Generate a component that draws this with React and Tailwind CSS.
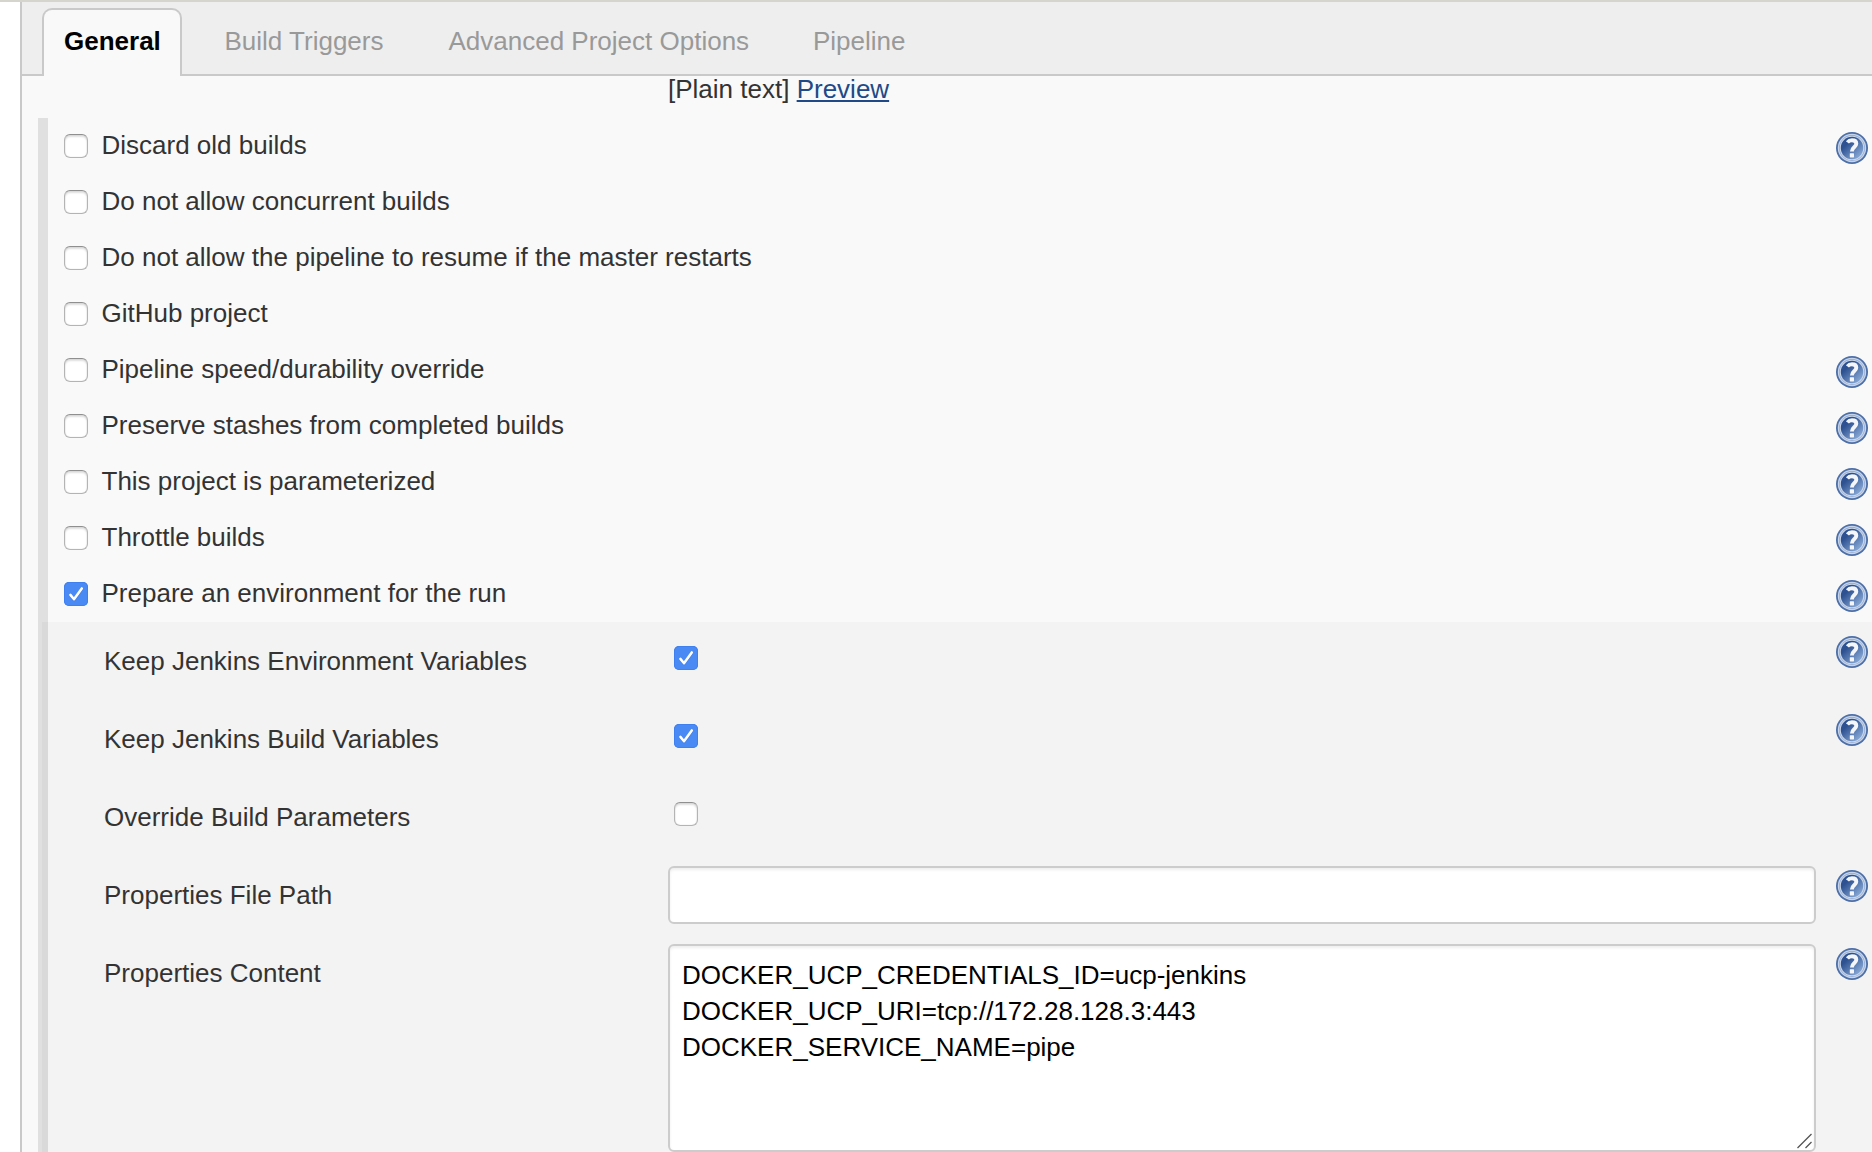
import React from "react";

const options = [
  { label: "Discard old builds", help: true },
  { label: "Do not allow concurrent builds" },
  { label: "Do not allow the pipeline to resume if the master restarts" },
  { label: "GitHub project" },
  { label: "Pipeline speed/durability override", help: true },
  { label: "Preserve stashes from completed builds", help: true },
  { label: "This project is parameterized", help: true },
  { label: "Throttle builds", help: true },
  { label: "Prepare an environment for the run", help: true, checked: true },
];

const content = `DOCKER_UCP_CREDENTIALS_ID=ucp-jenkins
DOCKER_UCP_URI=tcp://172.28.128.3:443
DOCKER_SERVICE_NAME=pipe`;

function Checkbox({ checked }) {
  if (checked) {
    return (
      <span className="block size-6 shrink-0 rounded-[5px] bg-[#4a8af4] shadow-[inset_0_0_0_1px_#3f80ee]">
        <svg viewBox="0 0 24 24" className="size-6" fill="none" strokeLinecap="round" strokeLinejoin="round">
          <path d="M6.4 13.6 10 18 17.8 7.2" stroke="#2f66c4" strokeOpacity="0.45" strokeWidth="2.4" />
          <path d="M6.4 12.9 10 17.2 17.8 6.4" stroke="#fff" strokeWidth="2.5" />
        </svg>
      </span>
    );
  }
  return (
    <span className="block size-6 shrink-0 rounded-[6px] border border-[#b4b4b4] border-t-[#8f8f8f] bg-white shadow-[inset_0_2px_2px_rgba(0,0,0,0.13),inset_0_0_1px_rgba(0,0,0,0.25)]" />
  );
}

function HelpIcon() {
  return (
    <svg viewBox="0 0 32 32" className="size-8 shrink-0" fill="none">
      <defs>
        <linearGradient id="helpFill" x1="0.15" y1="0.15" x2="0.85" y2="0.9">
          <stop offset="0.2" stopColor="#2d5191" />
          <stop offset="1" stopColor="#88a9d6" />
        </linearGradient>
      </defs>
      <circle cx="16" cy="16" r="16" fill="#4c6fa8" />
      <circle cx="16" cy="16" r="14.2" fill="#c6d3e8" />
      <circle cx="16" cy="16" r="12.9" fill="#8ea8cf" />
      <circle cx="16" cy="16" r="12.3" fill="#cbd8eb" />
      <circle cx="16" cy="16" r="11.2" fill="url(#helpFill)" />
      <path
        d="M11.4 10.4C12.6 8.9 14.2 8.300 16 8.300C18.700 8.300 20.300 9.700 20.300 11.800C20.300 15 15.900 15 15.900 19.400"
        stroke="#f4f6fa"
        strokeWidth="3.9"
      />
      <rect x="13.800" y="21.200" width="4.200" height="4.200" rx="0.600" fill="#f4f6fa" />
    </svg>
  );
}

function Tab({ children, className }) {
  return <div className={`h-full pt-[24px] leading-[30px] text-[#999] ${className}`}>{children}</div>;
}

function Field({ label, help, children }) {
  return (
    <div className="flex min-h-[78px] items-start">
      <div className="w-[564px] shrink-0 pt-[24px] leading-[30px]">{label}</div>
      <div className="w-[1168px] shrink-0">{children}</div>
      {help && (
        <div className="pt-[14px]">
          <HelpIcon />
        </div>
      )}
    </div>
  );
}

export default function App() {
  return (
    <div className="flex h-[1152px] w-[1872px] flex-col overflow-hidden border-t-2 border-[#d5d5cd] bg-white font-['Liberation_Sans',Arial,sans-serif] text-[26px] leading-[30px] text-[#333]">
      <div className="ml-5 flex min-h-0 flex-1 flex-col border-l-2 border-[#c9c9c9] bg-[#f9f9f9]">
        <nav className="flex h-[74px] shrink-0 bg-[#eee]">
          <div className="w-5 border-b-2 border-[#c9c9c9]" />
          <div className="flex w-[140px] pt-[6px]">
            <div className="flex-1 rounded-t-[10px] border-2 border-b-0 border-[#c9c9c9] bg-[#f9f9f9] pl-5 pt-4 font-bold leading-[30px] text-black">
              General
            </div>
          </div>
          <div className="flex flex-1 border-b-2 border-[#c9c9c9]">
            <Tab className="w-[224px] pl-[42.5px]">Build Triggers</Tab>
            <Tab className="w-[365px] pl-[42.5px]">Advanced Project Options</Tab>
            <Tab className="pl-[42px]">Pipeline</Tab>
          </div>
        </nav>

        <div className="h-[42px] shrink-0 pl-[646px] leading-[26px]">
          [Plain text]{" "}
          <a className="text-[#204a87] underline decoration-2 underline-offset-[2px]">Preview</a>
        </div>

        <div className="ml-4 flex min-h-0 flex-1">
          <div className="flex w-[10px] shrink-0 flex-col">
            <div className="h-[504px] shrink-0 bg-[#e0e0e0]" />
            <div className="flex flex-1">
              <div className="w-1 bg-[#e0e0e0]" />
              <div className="flex-1 bg-[#d9d9d9]" />
            </div>
          </div>
          <div className="flex flex-1 flex-col">
            {options.map((o) => (
              <div key={o.label} className="flex h-14 shrink-0 items-start pl-4">
                <div className="pt-4">
                  <Checkbox checked={o.checked} />
                </div>
                <div className="flex-1 pl-[13.5px] pt-3 leading-[30px]">{o.label}</div>
                {o.help && (
                  <div className="pr-1 pt-[14px]">
                    <HelpIcon />
                  </div>
                )}
              </div>
            ))}

            <div className="flex-1 bg-[#f3f3f3] pl-14">
              <Field label="Keep Jenkins Environment Variables" help>
                <div className="pl-1.5 pt-6">
                  <Checkbox checked />
                </div>
              </Field>
              <Field label="Keep Jenkins Build Variables" help>
                <div className="pl-1.5 pt-6">
                  <Checkbox checked />
                </div>
              </Field>
              <Field label="Override Build Parameters">
                <div className="pl-1.5 pt-6">
                  <Checkbox />
                </div>
              </Field>
              <Field label="Properties File Path" help>
                <div className="pt-[10px]">
                  <input className="block h-[58px] w-[1148px] rounded-[6px] border-2 border-[#ccc] bg-white px-3 shadow-[inset_0_2px_3px_rgba(0,0,0,0.07)]" />
                </div>
              </Field>
              <Field label="Properties Content" help>
                <div className="relative mt-[10px] w-[1148px]">
                  <textarea
                    className="block h-[208px] w-full resize-none overflow-hidden rounded-[6px] border-2 border-[#ccc] bg-white px-3 py-[11px] leading-9 text-black shadow-[inset_0_2px_3px_rgba(0,0,0,0.07)]"
                    defaultValue={content}
                    spellCheck={false}
                  />
                  <svg viewBox="0 0 16 16" className="absolute bottom-[3px] right-[3px] size-4" stroke="#555" strokeWidth="1.3">
                    <path d="M0.5 15 14.5 1M8.500 15 14.5 9" />
                  </svg>
                </div>
              </Field>
            </div>
          </div>
        </div>
      </div>
    </div>
  );
}
